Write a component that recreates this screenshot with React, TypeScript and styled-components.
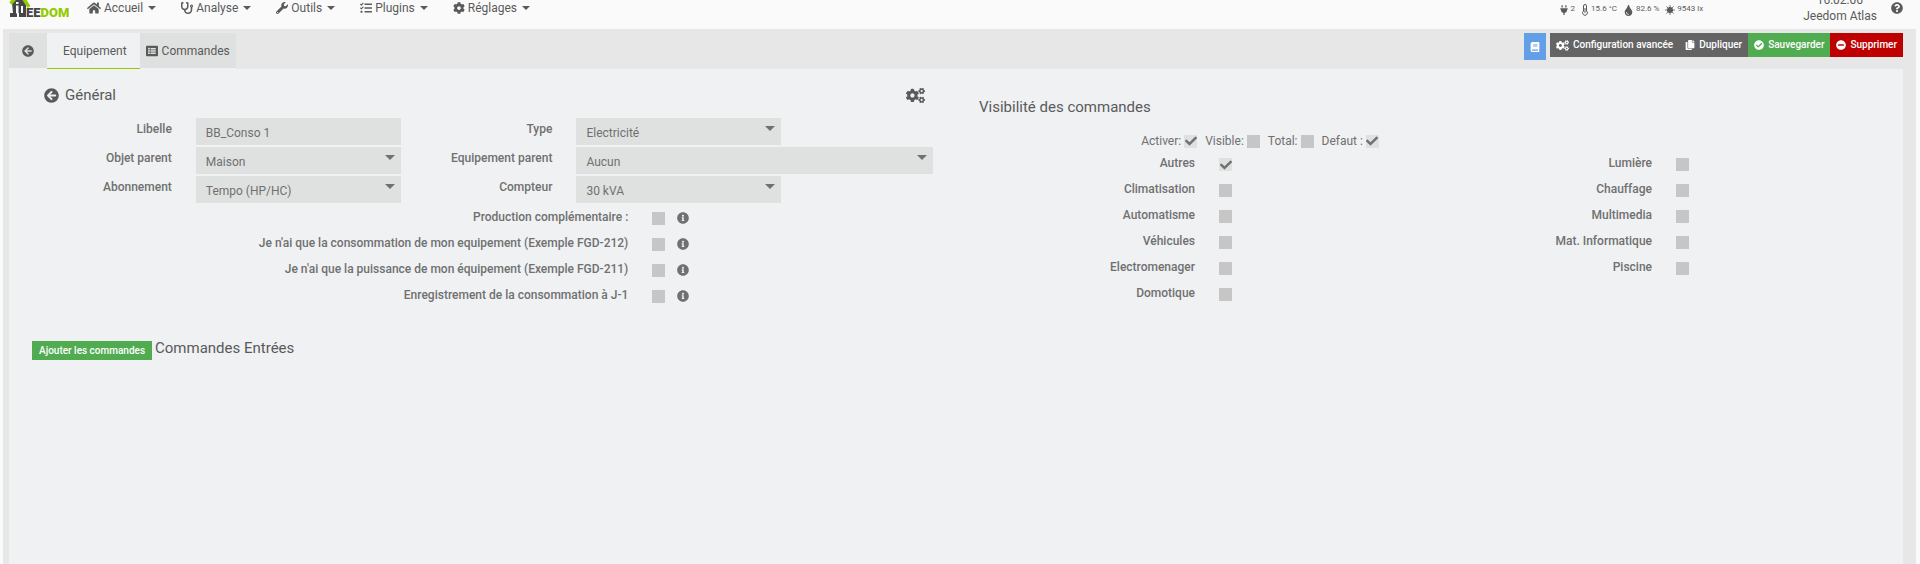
import React from "react";
import styled, { createGlobalStyle } from "styled-components";
import {
  FaArrowCircleLeft,
  FaBook,
  FaCheck,
  FaCheckCircle,
  FaCog,
  FaCogs,
  FaCopy,
  FaHome,
  FaInfoCircle,
  FaListAlt,
  FaMinusCircle,
  FaPlug,
  FaQuestionCircle,
  FaStethoscope,
  FaTasks,
  FaTint,
  FaWrench,
} from "react-icons/fa";

const color = {
  bar: "#fafafa",
  shell: "#e7e7e8",
  panel: "#eff1f3",
  field: "#dfe1e0",
  box: "#c6c6c6",
  title: "#5a5a5a",
  text: "#707070",
  lime: "#94ca02",
  green: "#51ab51",
  red: "#bf0000",
  dark: "#646464",
  blue: "#639fe6",
};

const GlobalStyle = createGlobalStyle`
  * { box-sizing: border-box; }
  body {
    margin: 0;
    background: ${color.bar};
    color: ${color.text};
    font-family: Roboto, "Liberation Sans", sans-serif;
    font-size: 12px;
    line-height: 16px;
  }
  button, input, select { font: inherit; color: inherit; margin: 0; }
  svg { display: block; flex: none; }
`;

const Page = styled.div`
  display: flex;
  flex-direction: column;
  min-height: 100vh;
  padding: 0 4px 0 3px;
`;

const Header = styled.header`
  display: flex;
  height: 29px;
  padding: 0 13px 0 6px;
  overflow: hidden;
  color: ${color.title};
`;

const LogoLink = styled.a`
  display: flex;
  align-items: flex-end;
  height: 19px;
  margin-right: 18px;
`;

const Menu = styled.nav`
  display: flex;
  align-items: center;
  gap: 25px;
  height: 16px;
`;

const MenuLink = styled.a`
  display: flex;
  align-items: center;
  gap: 3px;
  color: inherit;
  text-decoration: none;
`;

const Caret = styled.span`
  margin-left: 2px;
  border: 4px solid transparent;
  border-top-color: currentColor;
  border-bottom: 0;
`;

const Sensors = styled.div`
  display: flex;
  align-items: center;
  gap: 6px;
  height: 20px;
  margin-left: auto;
  font-size: 8px;
  line-height: 10px;
`;

const Sensor = styled.span`
  display: flex;
  align-items: center;
  gap: 2px;

  span { margin-bottom: 3px; }
`;

const Clock = styled.div`
  display: flex;
  flex-direction: column;
  justify-content: flex-end;
  align-items: flex-end;
  height: 24px;
  margin-left: 100px;
`;

const ClockTime = styled.time`
  margin-right: 14px;
`;

const HelpLink = styled.a`
  margin: 2px 0 0 14px;
  color: inherit;
`;

const Shell = styled.main`
  display: flex;
  flex: 1;
  flex-direction: column;
  padding: 4px 13px 0 6px;
  background: ${color.shell};
`;

const TopRow = styled.div`
  display: flex;
  justify-content: space-between;
  align-items: flex-start;
`;

const Tabs = styled.nav`
  display: flex;
`;

const Tab = styled.a<{ $active?: boolean }>`
  display: flex;
  align-items: center;
  gap: 4px;
  height: 36px;
  padding: ${(p) => (p.$active ? "0 13px 0 16px" : "0 6px")};
  background: ${(p) => (p.$active ? color.panel : color.field)};
  border-bottom: 1px solid ${(p) => (p.$active ? color.lime : color.panel)};
  color: ${color.title};
  text-decoration: none;
`;

const BackTab = styled(Tab)`
  padding: 0 13px;
`;

const Actions = styled.div`
  display: flex;
  align-items: flex-start;
`;

const DocButton = styled.button`
  display: flex;
  justify-content: center;
  align-items: center;
  width: 22px;
  height: 27px;
  margin-right: 4px;
  padding: 0;
  border: 0;
  background: ${color.blue};
  color: #fff;
`;

const ActionButton = styled.button<{ $bg: string }>`
  display: flex;
  align-items: center;
  gap: 4px;
  height: 24px;
  padding: 0 6px;
  border: 0;
  background: ${(p) => p.$bg};
  color: #fff;
  font-size: 10px;
  font-weight: 500;
`;

const Panel = styled.section`
  display: grid;
  grid-template-columns: 1fr 1fr;
  grid-template-rows: auto 1fr;
  flex: 1;
  background: ${color.panel};
`;

const General = styled.form`
  padding: 16px 23px 0 24px;
`;

const Visibility = styled.form`
  padding: 28px 23px 0 23px;
`;

const Heading = styled.h2`
  display: flex;
  align-items: center;
  gap: 6px;
  margin: 0;
  color: ${color.title};
  font-size: 15px;
  font-weight: 400;
  line-height: 20px;
`;

const HeadingRow = styled.div`
  display: flex;
  justify-content: space-between;
  align-items: center;
  margin-bottom: 13px;
  padding: 0 8px 0 11px;
  color: ${color.title};
`;

const Fields = styled.div`
  display: grid;
  grid-template-columns: 139fr 205fr 128fr 205fr 128fr;
  gap: 2px 24px;
`;

const FieldLabel = styled.label<{ $newLine?: boolean }>`
  ${(p) => p.$newLine && "grid-column: 1;"}
  line-height: 22px;
  font-weight: 500;
  text-align: right;
  white-space: nowrap;
`;

const TextField = styled.input`
  width: 100%;
  height: 27px;
  padding: 2px 10px 0;
  border: 0;
  background: ${color.field};
`;

const SelectWrap = styled.div<{ $wide?: boolean }>`
  position: relative;
  ${(p) => p.$wide && "grid-column: span 2;"}

  &::after {
    content: "";
    position: absolute;
    top: 8px;
    right: 6px;
    border: 5px solid transparent;
    border-top-color: ${color.text};
    border-bottom: 0;
    pointer-events: none;
  }
`;

const SelectField = styled.select`
  display: block;
  width: 100%;
  height: 27px;
  padding: 2px 10px 0;
  border: 0;
  border-radius: 0;
  background: ${color.field};
  appearance: none;
`;

const Options = styled.div`
  display: grid;
  grid-template-columns: 596fr 281fr;
  column-gap: 24px;
  grid-auto-rows: 26px;
  margin-top: 3px;
`;

const Categories = styled.div`
  display: grid;
  grid-template-columns: 216fr 193fr 216fr 204fr;
  column-gap: 24px;
  grid-auto-rows: 26px;
`;

const OptionCell = styled.div`
  display: flex;
  align-items: flex-start;
  gap: 12px;
  padding-top: 6px;
`;

const Switches = styled.div`
  display: flex;
  gap: 8px;
  margin: 15px 0 2px 18%;
`;

const SwitchLabel = styled.label`
  display: flex;
  align-items: center;
  gap: 3px;
  line-height: 18px;
`;

const BoxWrap = styled.span`
  display: grid;
  width: 13px;
  height: 13px;

  > * { grid-area: 1 / 1; }
  svg { place-self: center; pointer-events: none; visibility: hidden; }
  input:checked + svg { visibility: visible; }
`;

const BoxInput = styled.input`
  width: 13px;
  height: 13px;
  background: ${color.box};
  appearance: none;

  &:checked { background: ${color.field}; }
`;

const Entries = styled.div`
  display: flex;
  align-items: flex-start;
  gap: 3px;
  grid-column: 1 / -1;
  padding: 28px 23px 0;
`;

const AddButton = styled.button`
  height: 19px;
  margin-top: 3px;
  padding: 0 7px;
  border: 0;
  background: ${color.green};
  color: #fff;
  font-size: 10px;
  font-weight: 500;
`;

function Logo() {
  return (
    <svg width="60" height="30" viewBox="0 0 60 30" role="img" aria-label="Jeedom">
      <path d="M3 14 L11 5 L17 12 V28 H10 V24 H8 V28 H1 V24 H4 Z" fill="#454648" />
      <path d="M1.5 14.5 L11 4 L20 18" fill="none" stroke={color.lime} strokeWidth="3.5" />
      <path d="M7 13 h2.5 v2 h-2.5 z M7 16.5 h2.5 v8 h-2.5 z M12 17 h2 v7 h-2 z" fill={color.bar} />
      <text x="17" y="28" fontFamily="Roboto, sans-serif" fontWeight="900" fontSize="13" fill="#454648">
        EE<tspan fill={color.lime}>DOM</tspan>
      </text>
    </svg>
  );
}

function Thermometer() {
  return (
    <svg width="8" height="12" viewBox="0 0 8 12" fill="none" stroke="currentColor">
      <path d="M2.5 7 V2 a1.5 1.5 0 0 1 3 0 V7 a2.4 2.4 0 1 1 -3 0 Z" />
      <path d="M4 4 V9" />
    </svg>
  );
}

function Sun() {
  return (
    <svg width="10" height="10" viewBox="0 0 10 10" stroke="currentColor">
      <circle cx="5" cy="5" r="2.6" fill="currentColor" />
      <path d="M5 0 V10 M0 5 H10 M1.4 1.4 L8.6 8.6 M8.6 1.4 L1.4 8.6" strokeWidth="0.8" />
    </svg>
  );
}

function MenuItem({ icon, children }: { icon: React.ReactNode; children: React.ReactNode }) {
  return (
    <MenuLink href="#">
      {icon}
      {children}
      <Caret />
    </MenuLink>
  );
}

function Box({ id, checked }: { id: string; checked?: boolean }) {
  return (
    <BoxWrap>
      <BoxInput type="checkbox" id={id} defaultChecked={checked} />
      <FaCheck size={12} />
    </BoxWrap>
  );
}

function Select({ id, value, wide }: { id: string; value: string; wide?: boolean }) {
  return (
    <SelectWrap $wide={wide}>
      <SelectField id={id}>
        <option>{value}</option>
      </SelectField>
    </SelectWrap>
  );
}

const options = [
  "Production complémentaire :",
  "Je n'ai que la consommation de mon equipement (Exemple FGD-212)",
  "Je n'ai que la puissance de mon équipement (Exemple FGD-211)",
  "Enregistrement de la consommation à J-1",
];

const categories = [
  "Autres",
  "Lumière",
  "Climatisation",
  "Chauffage",
  "Automatisme",
  "Multimedia",
  "Véhicules",
  "Mat. Informatique",
  "Electromenager",
  "Piscine",
  "Domotique",
];

const switches = [
  { label: "Activer:", checked: true },
  { label: "Visible:", checked: false },
  { label: "Total:", checked: false },
  { label: "Defaut :", checked: true },
];

export default function App() {
  return (
    <Page>
      <GlobalStyle />
      <Header>
        <LogoLink href="#">
          <Logo />
        </LogoLink>
        <Menu>
          <MenuItem icon={<FaHome size={14} />}>Accueil</MenuItem>
          <MenuItem icon={<FaStethoscope size={12} />}>Analyse</MenuItem>
          <MenuItem icon={<FaWrench size={12} />}>Outils</MenuItem>
          <MenuItem icon={<FaTasks size={12} />}>Plugins</MenuItem>
          <MenuItem icon={<FaCog size={12} />}>Réglages</MenuItem>
        </Menu>
        <Sensors>
          <Sensor><FaPlug size={10} /><span>2</span></Sensor>
          <Sensor><Thermometer /><span>15.6 °C</span></Sensor>
          <Sensor><FaTint size={11} /><span>82.6 %</span></Sensor>
          <Sensor><Sun /><span>9543 lx</span></Sensor>
        </Sensors>
        <Clock>
          <ClockTime>16:02:06</ClockTime>
          <span>Jeedom Atlas</span>
        </Clock>
        <HelpLink href="#" aria-label="Aide"><FaQuestionCircle size={12} /></HelpLink>
      </Header>
      <Shell>
        <TopRow>
          <Tabs>
            <BackTab href="#" aria-label="Retour"><FaArrowCircleLeft size={12} /></BackTab>
            <Tab href="#" $active>Equipement</Tab>
            <Tab href="#"><FaListAlt size={12} />Commandes</Tab>
          </Tabs>
          <Actions>
            <DocButton aria-label="Documentation"><FaBook size={10} /></DocButton>
            <ActionButton $bg={color.dark}><FaCogs size={13} />Configuration avancée</ActionButton>
            <ActionButton $bg={color.dark}><FaCopy size={10} />Dupliquer</ActionButton>
            <ActionButton $bg={color.green}><FaCheckCircle size={10} />Sauvegarder</ActionButton>
            <ActionButton $bg={color.red}><FaMinusCircle size={10} />Supprimer</ActionButton>
          </Actions>
        </TopRow>
        <Panel>
          <General>
            <HeadingRow>
              <Heading><FaArrowCircleLeft size={15} />Général</Heading>
              <FaCogs size={19} />
            </HeadingRow>
            <Fields>
              <FieldLabel htmlFor="libelle">Libelle</FieldLabel>
              <TextField id="libelle" defaultValue="BB_Conso 1" />
              <FieldLabel htmlFor="type">Type</FieldLabel>
              <Select id="type" value="Electricité" />
              <FieldLabel $newLine htmlFor="objet">Objet parent</FieldLabel>
              <Select id="objet" value="Maison" />
              <FieldLabel htmlFor="parent">Equipement parent</FieldLabel>
              <Select id="parent" value="Aucun" wide />
              <FieldLabel $newLine htmlFor="abonnement">Abonnement</FieldLabel>
              <Select id="abonnement" value="Tempo (HP/HC)" />
              <FieldLabel htmlFor="compteur">Compteur</FieldLabel>
              <Select id="compteur" value="30 kVA" />
            </Fields>
            <Options>
              {options.map((label, i) => (
                <React.Fragment key={label}>
                  <FieldLabel htmlFor={`option-${i}`}>{label}</FieldLabel>
                  <OptionCell>
                    <Box id={`option-${i}`} />
                    <FaInfoCircle size={12} />
                  </OptionCell>
                </React.Fragment>
              ))}
            </Options>
          </General>
          <Visibility>
            <Heading>Visibilité des commandes</Heading>
            <Switches>
              {switches.map((s, i) => (
                <SwitchLabel key={s.label} htmlFor={`switch-${i}`}>
                  {s.label}
                  <Box id={`switch-${i}`} checked={s.checked} />
                </SwitchLabel>
              ))}
            </Switches>
            <Categories>
              {categories.map((label, i) => (
                <React.Fragment key={label}>
                  <FieldLabel htmlFor={`category-${i}`}>{label}</FieldLabel>
                  <OptionCell>
                    <Box id={`category-${i}`} checked={i === 0} />
                  </OptionCell>
                </React.Fragment>
              ))}
            </Categories>
          </Visibility>
          <Entries>
            <AddButton>Ajouter les commandes</AddButton>
            <Heading>Commandes Entrées</Heading>
          </Entries>
        </Panel>
      </Shell>
    </Page>
  );
}
